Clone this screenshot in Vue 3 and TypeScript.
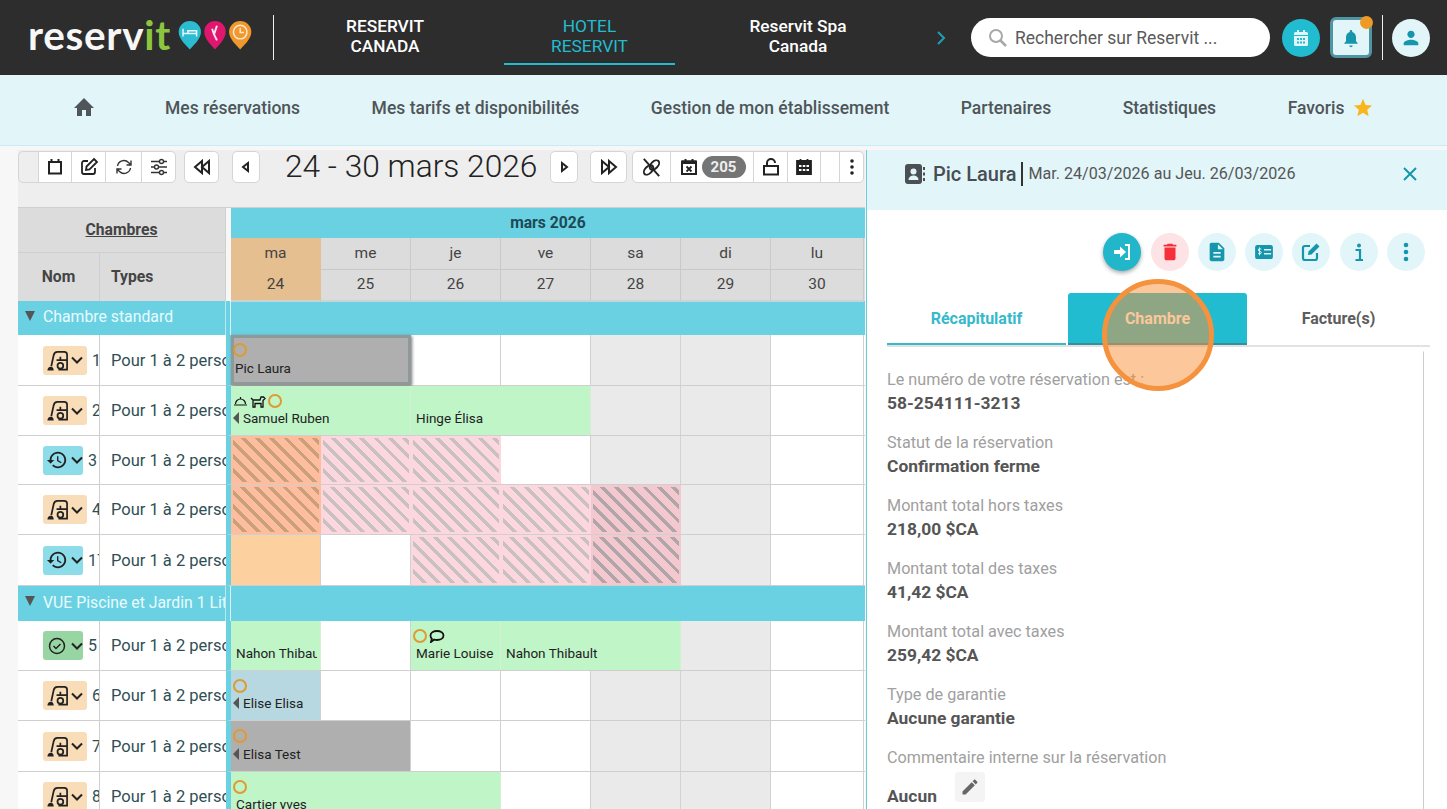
<script setup lang="ts">
interface Cell {
  span?: number
  kind?: string
  name?: string
  marks?: string[]
  arrow?: boolean
}
interface Room {
  num: string
  status: 'clean' | 'late' | 'ok'
  h: number
  cells: Cell[]
}
interface Section {
  title: string
  h: number
  rooms: Room[]
}

const days = [
  { d: 'ma', n: 24, today: true },
  { d: 'me', n: 25 },
  { d: 'je', n: 26 },
  { d: 've', n: 27 },
  { d: 'sa', n: 28 },
  { d: 'di', n: 29 },
  { d: 'lu', n: 30 },
]

const e: Cell = {}
const we: Cell = { kind: 'weekend' }

const sections: Section[] = [
  {
    title: 'Chambre standard',
    h: 34,
    rooms: [
      { num: '1', status: 'clean', h: 51, cells: [
        { span: 2, kind: 'grey selected', name: 'Pic Laura', marks: ['ring'] }, e, e, we, we, e,
      ] },
      { num: '2', status: 'clean', h: 50, cells: [
        { span: 2, kind: 'green', name: 'Samuel Ruben', marks: ['bell', 'dog', 'ring'], arrow: true },
        { span: 2, kind: 'green', name: 'Hinge Élisa' }, we, we, e,
      ] },
      { num: '3', status: 'late', h: 49, cells: [
        { kind: 'hatch-today' }, { kind: 'hatch' }, { kind: 'hatch' }, e, we, we, e,
      ] },
      { num: '4', status: 'clean', h: 50, cells: [
        { kind: 'hatch-today' }, { kind: 'hatch' }, { kind: 'hatch' }, { kind: 'hatch' }, { kind: 'hatch-dark' }, we, e,
      ] },
      { num: '17', status: 'late', h: 51, cells: [
        { kind: 'peach' }, e, { kind: 'hatch' }, { kind: 'hatch' }, { kind: 'hatch-dark' }, we, e,
      ] },
    ],
  },
  {
    title: 'VUE Piscine et Jardin 1 Lit',
    h: 35,
    rooms: [
      { num: '5', status: 'ok', h: 50, cells: [
        { kind: 'green', name: 'Nahon Thibault' }, e,
        { kind: 'green', name: 'Marie Louise', marks: ['ring', 'chat'] },
        { span: 2, kind: 'green', name: 'Nahon Thibault' }, we, e,
      ] },
      { num: '6', status: 'clean', h: 50, cells: [
        { kind: 'blue', name: 'Elise Elisa', marks: ['ring'], arrow: true }, e, e, e, we, we, e,
      ] },
      { num: '7', status: 'clean', h: 51, cells: [
        { span: 2, kind: 'grey', name: 'Elisa Test', marks: ['ring'], arrow: true }, e, e, we, we, e,
      ] },
      { num: '8', status: 'clean', h: 50, cells: [
        { span: 3, kind: 'green', name: 'Cartier yves', marks: ['ring'] }, e, we, we, e,
      ] },
    ],
  },
]

const fields = [
  { label: 'Le numéro de votre réservation est :', value: '58-254111-3213' },
  { label: 'Statut de la réservation', value: 'Confirmation ferme' },
  { label: 'Montant total hors taxes', value: '218,00 $CA' },
  { label: 'Montant total des taxes', value: '41,42 $CA' },
  { label: 'Montant total avec taxes', value: '259,42 $CA' },
  { label: 'Type de garantie', value: 'Aucune garantie' },
]

const navItems = ['Mes réservations', 'Mes tarifs et disponibilités', 'Gestion de mon établissement', 'Partenaires', 'Statistiques']
</script>

<template>
  <div class="page">
    <header class="topbar">
      <div class="logo">
        <span class="logo-text">reserv<span class="logo-it">it</span></span>
        <svg class="pins" width="76" height="32" viewBox="0 0 76 32">
          <path d="M12 1a11.500 11.500 0 0 1 11.500 11.500C23.500 20 15 27 12 30.500 9 27 .5 20 .5 12.500A11.500 11.500 0 0 1 12 1z" fill="#2cbcd2" />
          <path d="M5 9v8M5 14h14v3M19 14v-3H10v3" fill="none" stroke="#e8fbff" stroke-width="1.500" />
          <path d="M38 1a11 11 0 0 1 11 11.500C49 20 41 27 38 30.500 35 27 27 20 27 12.500A11 11 0 0 1 38 1z" fill="#e0166f" />
          <path d="M40 6l-3 9 3 6M35 9l2 6" fill="none" stroke="#fbe3ee" stroke-width="2" />
          <path d="M64 1a11.500 11.500 0 0 1 11.500 11.500C75.500 20 67 27 64 30.500 61 27 52.500 20 52.500 12.500A11.500 11.500 0 0 1 64 1z" fill="#f0982e" />
          <circle cx="64" cy="12.500" r="7" fill="none" stroke="#fde9cf" stroke-width="1.500" />
          <path d="M64 8v5h4" fill="none" stroke="#fde9cf" stroke-width="1.500" />
        </svg>
      </div>
      <span class="vline first"></span>
      <nav class="sites">
        <a class="site">RESERVIT<br />CANADA</a>
        <a class="site active">HOTEL<br />RESERVIT</a>
        <a class="site spa">Reservit Spa<br />Canada</a>
      </nav>
      <svg class="next" width="12" height="16" viewBox="0 0 12 16"><path d="M3 2l6 6-6 6" fill="none" stroke="#1f9fb5" stroke-width="2" /></svg>
      <div class="search">
        <svg width="20" height="20" viewBox="0 0 20 20"><circle cx="8" cy="8" r="6" fill="none" stroke="#a8a8a8" stroke-width="2" /><path d="M12.500 12.500L18 18" stroke="#a8a8a8" stroke-width="2.500" /></svg>
        <span>Rechercher sur Reservit ...</span>
      </div>
      <button class="round teal">
        <svg width="18" height="18" viewBox="0 0 18 18"><path d="M2 7h14v8.500a1.500 1.500 0 0 1-1.500 1.500h-11A1.500 1.500 0 0 1 2 15.500zM3.500 3H5V1h2v2h4V1h2v2h1.500A1.500 1.500 0 0 1 16 4.500V6H2V4.500A1.500 1.500 0 0 1 3.500 3z" fill="#e2f6fa" /><path d="M5 9h2v2H5zM8 9h2v2H8zM11 9h2v2h-2zM5 12.500h2v2H5zM8 12.500h2v2H8zM11 12.500h2v2h-2z" fill="#22bcd0" /></svg>
      </button>
      <button class="bell-btn">
        <svg width="20" height="20" viewBox="0 0 24 24"><path fill="#1596ac" d="M12 23c1.100 0 2-.9 2-2h-4c0 1.100.9 2 2 2zm6-7v-5c0-3.070-1.630-5.640-4.500-6.320V4c0-.83-.67-1.500-1.500-1.500s-1.500.67-1.500 1.500v.68C7.640 5.360 6 7.920 6 11v5l-2 2v1h16v-1l-2-2z" /></svg>
        <span class="dot"></span>
      </button>
      <span class="vline second"></span>
      <button class="round pale">
        <svg width="22" height="22" viewBox="0 0 24 24"><path fill="#1596ac" d="M12 12c2.210 0 4-1.790 4-4s-1.790-4-4-4-4 1.790-4 4 1.790 4 4 4zm0 2c-2.670 0-8 1.340-8 4v2h16v-2c0-2.660-5.330-4-8-4z" /></svg>
      </button>
    </header>

    <nav class="menu">
      <svg class="home" width="24" height="24" viewBox="0 0 24 24"><path fill="#4f5558" d="M10 21v-6h4v6h5v-8h3L12 3 2 13h3v8z" /></svg>
      <a v-for="item in navItems" :key="item">{{ item }}</a>
      <a class="fav">Favoris
        <svg width="22" height="22" viewBox="0 0 24 24"><path fill="#f9b51b" d="M12 17.270L18.180 21l-1.640-7.030L22 9.240l-7.190-.61L12 2 9.190 8.630 2 9.240l5.460 4.730L5.820 21z" /></svg>
      </a>
    </nav>

    <main class="content">
      <section class="planning">
        <div class="toolbar">
          <div class="group">
            <span class="tool blank"></span>
            <button class="tool w33"><svg viewBox="0 0 20 20"><path d="M4 5h12v11.500H4zM3 5h14M6.500 2v3M13.500 2v3" fill="none" stroke="#222" stroke-width="2" /></svg></button>
            <button class="tool w35"><svg viewBox="0 0 20 20"><path d="M9 4H5a2 2 0 0 0-2 2v9a2 2 0 0 0 2 2h9a2 2 0 0 0 2-2v-4" fill="none" stroke="#222" stroke-width="1.800" /><path d="M15 2l3 3-7.500 7.500L7 13l.5-3.500z" fill="none" stroke="#222" stroke-width="1.800" /></svg></button>
            <button class="tool w36"><svg viewBox="0 0 20 20"><path d="M3.500 9a6.500 6.500 0 0 1 11-3.500L17 8M16.500 11a6.500 6.500 0 0 1-11 3.500L3 12M17 3.500V8h-4.500M3 16.500V12h4.500" fill="none" stroke="#333" stroke-width="1.400" /></svg></button>
            <button class="tool w35"><svg viewBox="0 0 20 20"><path d="M2 4.500h16M2 10h16M2 15.500h16" stroke="#333" stroke-width="1.400" /><circle cx="12.500" cy="4.500" r="2" fill="#fff" stroke="#333" stroke-width="1.400" /><circle cx="7.500" cy="10" r="2" fill="#fff" stroke="#333" stroke-width="1.400" /><circle cx="12.500" cy="15.500" r="2" fill="#fff" stroke="#333" stroke-width="1.400" /></svg></button>
          </div>
          <button class="tool solo w35"><svg viewBox="0 0 20 20"><path d="M10 4L3 10l7 6zM17 4l-7 6 7 6z" fill="none" stroke="#222" stroke-width="2" /></svg></button>
          <button class="tool solo w28 gap13"><svg viewBox="0 0 20 20"><path d="M12 6l-5 4 5 4z" fill="none" stroke="#222" stroke-width="2" /></svg></button>
          <h1 class="period">24 - 30 mars 2026</h1>
          <button class="tool solo w28"><svg viewBox="0 0 20 20"><path d="M8 6l5 4-5 4z" fill="none" stroke="#222" stroke-width="2" /></svg></button>
          <button class="tool solo w36 gap12"><svg viewBox="0 0 20 20"><path d="M3 4l7 6-7 6zM10 4l7 6-7 6z" fill="none" stroke="#222" stroke-width="2" /></svg></button>
          <div class="group gap6">
            <button class="tool w39">
              <svg class="big" viewBox="0 0 24 24"><ellipse cx="9" cy="14.500" rx="6" ry="3.600" transform="rotate(-45 9 14.500)" fill="none" stroke="#222" stroke-width="2" /><ellipse cx="15" cy="9.500" rx="6" ry="3.600" transform="rotate(-45 15 9.500)" fill="none" stroke="#222" stroke-width="2" /><path d="M4 3l16 18" stroke="#222" stroke-width="2" /></svg>
            </button>
            <div class="tool w83">
              <svg viewBox="0 0 20 20"><path d="M3 4.500h14V17H3zM6.500 2v3M13.500 2v3" fill="none" stroke="#222" stroke-width="2" /><path d="M3 3.500h14V7H3z" fill="#222" /><path d="M7.500 9.500l5 5M12.500 9.500l-5 5" stroke="#222" stroke-width="1.800" /></svg>
              <span class="badge">205</span>
            </div>
            <button class="tool w34"><svg viewBox="0 0 20 20"><path d="M3 9h14v8.500H3z" fill="none" stroke="#222" stroke-width="2" /><path d="M6 9V6a4 4 0 0 1 8 0" fill="none" stroke="#222" stroke-width="2" /></svg></button>
            <button class="tool w33"><svg viewBox="0 0 20 20"><path d="M3 4h14v13H3zM6.500 2v3M13.500 2v3" fill="#222" stroke="#222" stroke-width="1.800" /><path d="M5 8h2.500v2H5zM8.800 8h2.500v2H8.800zM12.500 8H15v2h-2.500zM5 12h2.500v2H5zM8.800 12h2.500v2H8.800zM12.500 12H15v2h-2.500z" fill="#fff" /></svg></button>
            <span class="tool blank w19"></span>
            <button class="tool w24"><svg viewBox="0 0 20 20"><circle cx="10" cy="4" r="1.800" fill="#222" /><circle cx="10" cy="10" r="1.800" fill="#222" /><circle cx="10" cy="16" r="1.800" fill="#222" /></svg></button>
          </div>
        </div>

        <div class="sheet">
          <div class="row head">
            <div class="rooms-head">
              <div class="rooms-title">Chambres</div>
              <div class="rooms-cols"><span class="c-nom">Nom</span><span class="c-types">Types</span></div>
            </div>
            <div class="days-head">
              <div class="month">mars 2026</div>
              <div class="day-line names">
                <span v-for="day in days" :key="day.d" :class="{ today: day.today }">{{ day.d }}</span>
              </div>
              <div class="day-line nums">
                <span v-for="day in days" :key="day.n" :class="{ today: day.today }">{{ day.n }}</span>
              </div>
            </div>
          </div>

          <template v-for="section in sections" :key="section.title">
            <div class="row cat" :style="{ height: section.h + 'px' }">
              <div class="cat-left"><i class="tri"></i><span>{{ section.title }}</span></div>
              <div class="cat-right"></div>
            </div>
            <div v-for="room in section.rooms" :key="room.num" class="row room" :style="{ height: room.h + 'px' }">
              <div class="room-left">
                <div class="room-name">
                  <span class="state" :class="room.status">
                    <svg v-if="room.status === 'clean'" class="sweep" width="23" height="23" viewBox="0 0 24 24"><path d="M1.500 22.500c0-2.500 1.500-4 3.500-4s3 1.500 3 4z" fill="#222" /><path d="M5.500 18L8 6.500C8.500 4 10 3 12 3h7c1.700 0 3 1.300 3 3v15.500h-9" fill="none" stroke="#222" stroke-width="1.800" /><circle cx="15" cy="17.500" r="3" fill="none" stroke="#222" stroke-width="1.800" /><path d="M11 11.500h11M15 11.500V8" fill="none" stroke="#222" stroke-width="1.800" /></svg>
                    <svg v-else-if="room.status === 'late'" width="22" height="22" viewBox="0 0 24 24"><path fill="#222" d="M13 3c-4.970 0-9 4.030-9 9H1l3.890 3.890.07.14L9 12H6c0-3.870 3.130-7 7-7s7 3.130 7 7-3.130 7-7 7c-1.930 0-3.680-.79-4.940-2.060l-1.420 1.420C8.270 19.990 10.510 21 13 21c4.970 0 9-4.030 9-9s-4.030-9-9-9zm-1 5v5l4.280 2.540.72-1.210-3.500-2.080V8H12z" /></svg>
                    <svg v-else width="20" height="20" viewBox="0 0 20 20"><circle cx="10" cy="10" r="7.500" fill="none" stroke="#222" stroke-width="1.500" /><path d="M6.500 10l2.500 2.500 4.500-4.500" fill="none" stroke="#222" stroke-width="1.500" /></svg>
                    <svg class="caret" width="12" height="8" viewBox="0 0 12 8"><path d="M1 1.500l5 5 5-5" fill="none" stroke="#222" stroke-width="2" /></svg>
                  </span>
                  <span class="num">{{ room.num }}</span>
                </div>
                <div class="room-type">Pour 1 à 2 personnes</div>
              </div>
              <div class="room-days">
                <div v-for="(cell, i) in room.cells" :key="i" class="cell" :class="cell.kind" :style="{ gridColumn: 'span ' + (cell.span || 1) }">
                  <div v-if="cell.marks" class="marks">
                    <template v-for="m in cell.marks" :key="m">
                      <i v-if="m === 'ring'" class="ring"></i>
                      <svg v-else-if="m === 'bell'" width="15" height="13" viewBox="0 0 15 13"><path d="M2.500 9a5 5 0 0 1 10 0M1 10h13M7.500 2v2" fill="none" stroke="#111" stroke-width="1.200" /></svg>
                      <svg v-else-if="m === 'dog'" width="16" height="13" viewBox="0 0 16 13"><path d="M1 3l2 2h7l1-3h2.500L15 3.500 13 5.500V12h-2V8.500H5V12H3V5" fill="none" stroke="#111" stroke-width="1.300" /></svg>
                      <svg v-else width="16" height="13" viewBox="0 0 16 13"><path d="M8 1c3.600 0 6.500 1.900 6.500 4.500S11.600 10 8 10c-1 0-2-.2-2.800-.4L2 12l.8-3.400C1.900 7.800 1.500 6.700 1.500 5.500 1.500 2.900 4.400 1 8 1z" fill="none" stroke="#111" stroke-width="1.800" /></svg>
                    </template>
                  </div>
                  <div v-if="cell.name" class="guest" :class="{ 'has-arrow': cell.arrow }"><i v-if="cell.arrow" class="back"></i>{{ cell.name }}</div>
                </div>
              </div>
            </div>
          </template>
        </div>
      </section>

      <aside class="panel">
        <div class="panel-head">
          <svg class="contact" width="24" height="24" viewBox="0 0 24 24"><rect x="2" y="2" width="17" height="20" rx="3" fill="#4a4f54" /><circle cx="10.500" cy="9.500" r="3" fill="#e2f6fa" /><path d="M5.500 18c0-3 2.200-4.500 5-4.500s5 1.500 5 4.500z" fill="#e2f6fa" /><path d="M21 5v3M21 10.500v3M21 16v3" stroke="#4a4f54" stroke-width="2" /></svg>
          <strong>Pic Laura</strong>
          <span class="sep"></span>
          <span class="stay">Mar. 24/03/2026 au Jeu. 26/03/2026</span>
          <svg class="close" width="18" height="18" viewBox="0 0 18 18"><path d="M3 3l12 12M15 3L3 15" stroke="#1596ac" stroke-width="2" /></svg>
        </div>

        <div class="actions">
          <button class="act solid"><svg width="20" height="20" viewBox="0 0 20 20"><path d="M2 8h6V4.500l6 5.500-6 5.500V12H2z" fill="#fff" /><path d="M13 3h4v14h-4" fill="none" stroke="#fff" stroke-width="2" /></svg></button>
          <button class="act danger"><svg width="22" height="22" viewBox="0 0 24 24"><path fill="#f5303a" d="M6 19c0 1.100.9 2 2 2h8c1.100 0 2-.9 2-2V7H6v12zM19 4h-3.500l-1-1h-5l-1 1H5v2h14V4z" /></svg></button>
          <button class="act"><svg width="22" height="22" viewBox="0 0 24 24"><path fill="#1596ac" d="M14 2H6c-1.100 0-1.990.9-1.990 2L4 20c0 1.100.89 2 1.990 2H18c1.100 0 2-.9 2-2V8l-6-6zm2 16H8v-2h8v2zm0-4H8v-2h8v2zm-3-5V3.500L18.500 9H13z" /></svg></button>
          <button class="act"><svg width="20" height="16" viewBox="0 0 22 18"><rect x="1" y="1" width="20" height="16" rx="2.500" fill="#1596ac" /><path d="M11 6.500h8M11 11h8" stroke="#e2f6fa" stroke-width="1.800" /><path d="M8 6c-.5-1-3.500-1-3.500.7 0 2 3.500 1 3.500 3 0 1.700-3 1.700-3.700.6M6 3.800v9" fill="none" stroke="#e2f6fa" stroke-width="1.100" /></svg></button>
          <button class="act"><svg width="20" height="20" viewBox="0 0 20 20"><path d="M9 4H4a2 2 0 0 0-2 2v10a2 2 0 0 0 2 2h10a2 2 0 0 0 2-2v-5" fill="none" stroke="#1596ac" stroke-width="2.200" /><path d="M15.500 1.500l3 3-8 8L7 13l.5-3.500z" fill="#1596ac" /></svg></button>
          <button class="act info"><svg width="12" height="20" viewBox="0 0 12 20"><circle cx="6" cy="3.500" r="2" fill="#1596ac" /><path d="M2.500 8H7v9M2.500 18h7.500" fill="none" stroke="#1596ac" stroke-width="2.200" /></svg></button>
          <button class="act"><svg width="20" height="22" viewBox="0 0 20 22"><circle cx="10" cy="4" r="2.300" fill="#1596ac" /><circle cx="10" cy="11" r="2.300" fill="#1596ac" /><circle cx="10" cy="18" r="2.300" fill="#1596ac" /></svg></button>
        </div>

        <div class="tabs">
          <a class="tab on">Récapitulatif</a>
          <a class="tab sel">Chambre</a>
          <a class="tab">Facture(s)</a>
        </div>

        <div class="details">
          <div v-for="f in fields" :key="f.label" class="field">
            <span class="lbl">{{ f.label }}</span>
            <span class="val">{{ f.value }}</span>
          </div>
          <div class="field">
            <span class="lbl">Commentaire interne sur la réservation</span>
            <span class="val with-edit">Aucun
              <span class="pencil"><svg width="20" height="20" viewBox="0 0 24 24"><path fill="#666" d="M3 17.250V21h3.750L17.810 9.940l-3.750-3.750L3 17.250zM20.710 7.040c.39-.39.39-1.020 0-1.410l-2.340-2.340c-.39-.39-1.020-.39-1.410 0l-1.830 1.830 3.750 3.750 1.830-1.830z" /></svg></span>
            </span>
          </div>
        </div>
      </aside>

      <div class="spot"></div>
    </main>
  </div>
</template>

<style scoped>
.page {
  height: 809px;
  overflow: hidden;
  display: flex;
  flex-direction: column;
  font-family: Roboto, "Liberation Sans", sans-serif;
  color: #333;
}
button {
  padding: 0;
  border: none;
  background: none;
  font: inherit;
}

/* barre du haut */
.topbar {
  height: 75px;
  flex: none;
  display: flex;
  align-items: center;
  padding-left: 28px;
  background: #2d2d2d;
  color: #fff;
}
.logo {
  width: 245px;
  display: flex;
  align-items: center;
  gap: 7px;
}
.logo-text {
  font-family: Lato, sans-serif;
  font-size: 40.500px;
  font-weight: 700;
  line-height: 1;
  letter-spacing: 0.7px;
  margin-top: -5px;
  color: #f7f7f7;
}
.logo-it {
  color: #8cc63f;
}
.pins {
  margin-top: -4px;
  flex: none;
  width: 74px;
  height: 31px;
}
.vline {
  width: 1px;
  height: 45px;
  background: #eee;
  flex: none;
}
.sites {
  display: flex;
  gap: 34px;
  margin-left: 26px;
}
.site {
  width: 170px;
  height: 45px;
  text-align: center;
  font-size: 17.300px;
  font-weight: 500;
  line-height: 20px;
  padding-top: 2px;
  margin-top: 4px;
  box-sizing: content-box;
}
.site.active {
  color: #22bcd0;
  font-weight: 400;
  border-bottom: 2px solid #22bcd0;
  width: 171px;
  height: 47px;
}
.site.spa {
  margin-left: 4px;
}
.next {
  margin-left: 52px;
}
.search {
  width: 299px;
  height: 39px;
  margin-left: 24px;
  display: flex;
  align-items: center;
  gap: 7px;
  padding-left: 17px;
  box-sizing: border-box;
  border-radius: 20px;
  background: #fff;
  color: #5a5a5a;
  font-size: 17.500px;
}
.round {
  width: 38px;
  height: 38px;
  border-radius: 50%;
  display: flex;
  align-items: center;
  justify-content: center;
  flex: none;
}
.round.teal {
  background: #22bcd0;
  margin-left: 12px;
}
.round.pale {
  background: #e2f6fa;
  margin-left: 9px;
}
.bell-btn {
  position: relative;
  width: 42px;
  height: 41px;
  box-sizing: border-box;
  margin-left: 10px;
  border: 3px solid #4f95a3;
  border-radius: 6px;
  background: #e2f6fa;
  display: flex;
  align-items: center;
  justify-content: center;
}
.dot {
  position: absolute;
  top: -4px;
  right: -4px;
  width: 13px;
  height: 13px;
  border-radius: 50%;
  background: #ef9a25;
}
.vline.second {
  margin-left: 10px;
}

/* menu */
.menu {
  height: 71px;
  flex: none;
  box-sizing: border-box;
  display: flex;
  align-items: center;
  gap: 71.500px;
  padding: 0 0 5px 72px;
  background: #e2f6fa;
  color: #4f5558;
  font-size: 17.500px;
  font-weight: 500;
  border-bottom: 1px solid #c8ecf3;
}
.home {
  margin-right: -2.500px;
  margin-top: -1px;
}
.fav {
  display: flex;
  align-items: center;
  gap: 8px;
}

/* contenu */
.content {
  position: relative;
  flex: 1;
  min-height: 0;
  display: flex;
  padding-top: 4px;
  background: #f7f7f7;
}
.planning {
  margin-left: 18px;
  margin-right: 1px;
  width: 847px;
  flex: none;
}
.toolbar {
  height: 57px;
  box-sizing: border-box;
  display: flex;
  align-items: flex-start;
  background: #eee;
  padding-top: 1px;
}
.group {
  display: flex;
}
.group.gap6 {
  margin-left: 5px;
}
.tool {
  height: 32px;
  box-sizing: border-box;
  display: flex;
  align-items: center;
  justify-content: center;
  gap: 3px;
  background: #fff;
  border: 1px solid #d5d5d5;
  margin-left: -1px;
  flex: none;
}
.tool svg {
  width: 20px;
  height: 20px;
  flex: none;
}
.tool svg.big {
  width: 23px;
  height: 23px;
}
.group .tool:first-child {
  border-radius: 5px 0 0 5px;
  margin-left: 0;
}
.group .tool:last-child {
  border-radius: 0 5px 5px 0;
}
.tool.blank {
  width: 21px;
  background: #eee;
}
.tool.blank.w19 {
  width: 20px;
  background: #fff;
}
.tool.solo {
  border-radius: 5px;
  margin-left: 8px;
}
.tool.solo.gap13 {
  margin-left: 13px;
}
.tool.solo.gap12 {
  margin-left: 12px;
}
.w24 { width: 25px; }
.w28 { width: 28px; }
.w33 { width: 34px; }
.w34 { width: 35px; }
.w35 { width: 35px; }
.w36 { width: 37px; }
.w39 { width: 39px; }
.w83 { width: 84px; }
.badge {
  width: 44px;
  height: 22px;
  border-radius: 11px;
  background: #757575;
  color: #eee;
  font-size: 15px;
  font-weight: 700;
  line-height: 22px;
  text-align: center;
}
.period {
  margin: -2px 0 0 25px;
  width: 257px;
  flex: none;
  font-size: 31.700px;
  font-weight: 300;
  line-height: 36px;
  color: #222;
  white-space: nowrap;
}

/* grille */
.sheet {
  border-top: 1px solid #cfcfcf;
}
.row {
  display: flex;
}
.head {
  height: 93px;
}
.rooms-head,
.room-left,
.cat-left {
  width: 208px;
  flex: none;
  box-sizing: border-box;
}
.rooms-head {
  background: #dcdcdc;
  font-size: 15.700px;
  font-weight: 700;
  color: #444;
  border-right: 1px solid #cfcfcf;
}
.rooms-title {
  height: 45px;
  box-sizing: border-box;
  text-align: center;
  line-height: 44px;
  text-decoration: underline;
  border-bottom: 1px solid #cfcfcf;
}
.rooms-cols {
  display: flex;
  height: 48px;
  line-height: 47px;
}
.c-nom {
  width: 82px;
  box-sizing: border-box;
  text-align: center;
  border-right: 1px solid #cfcfcf;
}
.c-types {
  padding-left: 11px;
}
.days-head {
  flex: 1;
  margin-left: 5px;
}
.month {
  height: 30px;
  background: #69d1e2;
  text-align: center;
  font-size: 15.700px;
  font-weight: 700;
  line-height: 30px;
  color: #1d4a55;
}
.day-line {
  display: grid;
  grid-template-columns: repeat(6, 90px) 93px;
  background: #dcdcdc;
  color: #444;
  font-size: 15.500px;
  text-align: center;
}
.day-line span {
  box-sizing: border-box;
  border-right: 1px solid #c9c9c9;
}
.day-line span.today {
  background: #e6bf90;
  border-right-color: #e6bf90;
}
.names {
  height: 31px;
  line-height: 31px;
}
.names span {
  border-bottom: 1px solid #c9c9c9;
}
.nums {
  height: 32px;
  line-height: 31px;
}
.nums span {
  border-bottom: 2px solid #c9d4d6;
}
.names span.today {
  border-bottom: 1px solid #d9b282;
}
.cat {
  background: #69d1e2;
}
.cat-left {
  display: flex;
  align-items: center;
  gap: 7px;
  padding-left: 7px;
  overflow: hidden;
  white-space: nowrap;
  color: #e9fbff;
  font-size: 15.800px;
  border-right: 1px solid #b9e9f1;
  height: 100%;
  padding-bottom: 3px;
}
.tri {
  width: 0;
  height: 0;
  flex: none;
  margin-top: -2px;
  border-left: 5px solid transparent;
  border-right: 5px solid transparent;
  border-top: 10px solid #555;
  margin-right: 1px;
}
.cat-right {
  flex: 1;
  margin-left: 4px;
  border-left: 1px solid #d9f4f8;
}
.room {
  background: #fff;
}
.room-left {
  display: flex;
  border-bottom: 1px solid #cfcfcf;
  background: #fff;
}
.room-name {
  width: 82px;
  flex: none;
  box-sizing: border-box;
  display: flex;
  align-items: center;
  gap: 5px;
  padding-left: 25px;
  border-right: 1px solid #cfcfcf;
  overflow: hidden;
  white-space: nowrap;
  color: #2f4f55;
  font-size: 16px;
}
.state {
  height: 29px;
  flex: none;
  display: flex;
  align-items: center;
  gap: 3px;
  padding-left: 3px;
  box-sizing: border-box;
  border-radius: 3px;
}
.state svg {
  flex: none;
}
.state.clean {
  width: 44px;
  background: #f9dcb8;
  gap: 2px;
}
.state.late {
  width: 40px;
  background: #8cdcea;
}
.state.ok {
  width: 40px;
  padding-left: 4px;
  gap: 4px;
  background: #97d6a3;
}
.room-type {
  flex: 1;
  padding-left: 11px;
  align-self: center;
  overflow: hidden;
  white-space: nowrap;
  color: #2f4f55;
  font-size: 16.500px;
}
.room-days {
  flex: 1;
  display: grid;
  grid-template-columns: repeat(6, 90px) 93px;
  border-left: 5px solid #69d1e2;
  border-bottom: 1px solid #cfcfcf;
  box-sizing: border-box;
}
.cell {
  position: relative;
  box-sizing: border-box;
  border-right: 1px solid #d2d2d2;
  font-size: 13.500px;
  color: #222;
  min-width: 0;
  overflow: hidden;
}
.cell.weekend {
  background: #eaeaea;
}
.cell.green {
  background: #c0f5c8;
  border-right-color: #d5eed8;
}
.cell.blue {
  background: #b7d8e1;
}
.cell.grey {
  background: #afafaf;
}
.cell.selected {
  border: 3px solid #8f9999;
  box-shadow: 1px 1px 3px #777;
  overflow: visible;
}
.cell.peach {
  background: #fdd0a0;
}
.cell.hatch {
  border: 2px solid #fcd8de;
  background: repeating-linear-gradient(45deg, #fcd8de 0 6.500px, #c9c0c2 6.500px 10px);
}
.cell.hatch-today {
  border: 2px solid #fdbd9e;
  background: repeating-linear-gradient(45deg, #fdbd9e 0 6.500px, #c9a078 6.500px 10px);
}
.cell.hatch-dark {
  border: 2px solid #f4c8cf;
  background: repeating-linear-gradient(45deg, #f4c8cf 0 6.500px, #b0a5a8 6.500px 10px);
}
.marks {
  display: flex;
  align-items: center;
  gap: 2px;
  height: 20px;
  padding: 5px 0 0 2px;
}
.ring {
  width: 14px;
  height: 14px;
  box-sizing: border-box;
  border: 2px solid #e09a30;
  border-radius: 50%;
  flex: none;
}
.guest {
  position: absolute;
  left: 5px;
  right: 3px;
  bottom: 9px;
  overflow: hidden;
  white-space: nowrap;
  line-height: 16px;
  display: flex;
  align-items: center;
}
.guest.has-arrow {
  left: 2px;
}
.selected .guest {
  left: 1px;
  bottom: 6px;
}
.selected .marks {
  height: 14px;
  padding: 5px 0 0 0;
  margin-left: -1px;
}
.back {
  width: 0;
  height: 0;
  margin-right: 4px;
  flex: none;
  border-top: 6px solid transparent;
  border-bottom: 6px solid transparent;
  border-right: 6px solid #555;
}

/* panneau */
.panel {
  flex: 1;
  min-width: 0;
  background: #fff;
  border-left: 1px solid #6cc9d8;
}
.panel-head {
  height: 60px;
  display: flex;
  align-items: center;
  padding: 0 28px 13px 36px;
  box-sizing: border-box;
  background: #e2f6fa;
}
.contact {
  margin-right: 6px;
}
.panel-head strong {
  font-size: 20px;
  font-weight: 500;
  color: #474e52;
}
.sep {
  width: 2px;
  height: 24px;
  margin: 0 5px 0 5px;
  background: #333;
}
.stay {
  font-size: 16.100px;
  color: #555;
}
.close {
  margin-left: auto;
}
.actions {
  height: 83px;
  display: flex;
  justify-content: flex-end;
  gap: 9.300px;
  padding: 23px 22px 0 0;
  box-sizing: border-box;
}
.act {
  width: 38px;
  height: 38px;
  border-radius: 50%;
  display: flex;
  align-items: center;
  justify-content: center;
  background: #e2f6fa;
}
.act.solid {
  background: #22b6cb;
  box-shadow: 0 2px 4px rgba(0, 0, 0, 0.35);
}
.act.danger {
  background: #fde3e5;
}
.tabs {
  display: flex;
  margin: 0 17px 0 20px;
  height: 52px;
  border-bottom: 2px solid #e2e2e2;
  color: #5d5d5d;
  font-size: 16px;
  font-weight: 700;
  text-align: center;
}
.tab {
  flex: 1;
  height: 52px;
  line-height: 52px;
  box-sizing: border-box;
}
.tab.on {
  flex: none;
  width: 179px;
  color: #35b9cb;
  border-bottom: 2px solid #35b9cb;
}
.tab.sel {
  flex: none;
  width: 179px;
  margin-left: 2px;
  color: #fff;
  background: #22bcd0;
  border-radius: 3px 3px 0 0;
  border-bottom: 2px solid #3a8e9c;
}
.details {
  margin: 4px 23px 0 20px;
  padding-top: 18px;
  border-right: 1px solid #ccc;
  border-top: 1px solid #fff;
  position: relative;
}
.field {
  display: flex;
  flex-direction: column;
  height: 63px;
}
.lbl {
  font-size: 16.200px;
  line-height: 20px;
  color: #a0a0a0;
  white-space: nowrap;
}
.val {
  margin-top: 3px;
  font-size: 17.400px;
  font-weight: 700;
  line-height: 20px;
  color: #555;
}
.with-edit {
  display: flex;
  align-items: center;
  gap: 18px;
  margin-top: 18px;
}
.pencil {
  width: 30px;
  height: 30px;
  margin-top: -18px;
  display: flex;
  align-items: center;
  justify-content: center;
  background: #f4f4f4;
  border-radius: 3px;
}
.spot {
  position: absolute;
  left: 1102px;
  top: 133px;
  width: 112px;
  height: 112px;
  box-sizing: border-box;
  border: 5px solid #f5923e;
  border-radius: 50%;
  background: rgba(249, 143, 53, 0.5);
  pointer-events: none;
}
</style>

<style>
html,
body {
  margin: 0;
  overflow: hidden;
}
</style>
